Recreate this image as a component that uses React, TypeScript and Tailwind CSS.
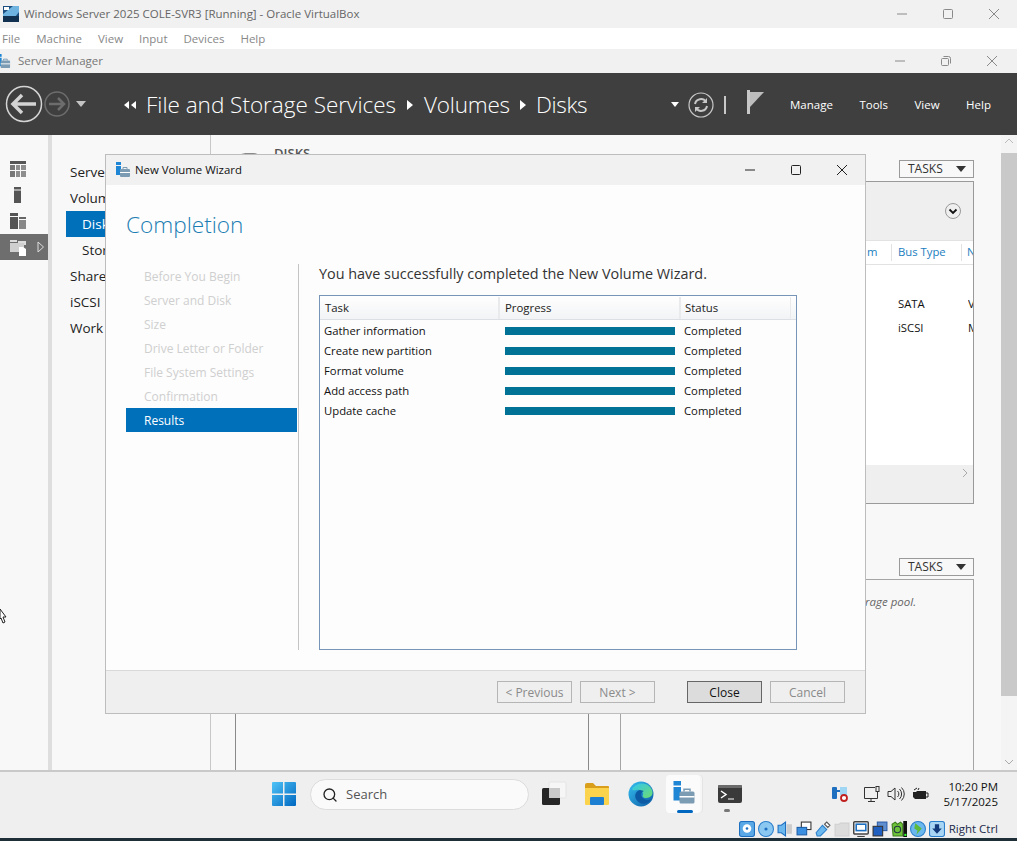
import { Search } from 'lucide-react'

const font = { fontFamily: '"Open Sans", "Noto Sans", sans-serif' }

const wizardSteps = ['Before You Begin', 'Server and Disk', 'Size', 'Drive Letter or Folder', 'File System Settings', 'Confirmation']
const tasks = ['Gather information', 'Create new partition', 'Format volume', 'Add access path', 'Update cache']

function WinControls({ restore, dark }: { restore?: boolean; dark?: boolean }) {
  const c = dark ? '#222' : '#8a8a8a'
  return (
    <div className="flex items-center">
      <svg width="46" height="16" viewBox="0 0 46 16"><path d="M18 8h10" stroke={c} /></svg>
      <svg width="46" height="16" viewBox="0 0 46 16">
        {restore ? (
          <g fill="none" stroke={c}><rect x="18.5" y="5.5" width="7" height="7" rx="1" /><path d="M20.5 3.5h5a2 2 0 0 1 2 2v5" /></g>
        ) : (
          <rect x="18.5" y="3.5" width="9" height="9" rx="1" fill="none" stroke={c} />
        )}
      </svg>
      <svg width="46" height="16" viewBox="0 0 46 16"><path d="M18 3l10 10M28 3L18 13" stroke={c} /></svg>
    </div>
  )
}

function ServerIcon({ size = 16 }: { size?: number }) {
  return (
    <svg width={size} height={size} viewBox="0 0 16 16">
      <rect x="1" y="0" width="5" height="3" fill="#1f86d6" />
      <rect x="1" y="4" width="5" height="9" fill="#1f86d6" />
      <rect x="5" y="7" width="10" height="8" rx="1" fill="#7c9cb4" />
      <path d="M8 7V5.5h4V7" fill="none" stroke="#7c9cb4" />
      <path d="M5 10.5h10" stroke="#fff" />
    </svg>
  )
}

function SideRow({ active, children }: { active?: boolean; children: React.ReactNode }) {
  return (
    <div className={active ? 'flex h-[26px] items-center bg-[#6e6e6e] pl-[10px]' : 'flex h-[26px] items-center pl-[10px]'}>
      {children}
      {active && (
        <svg className="ml-[10px]" width="8" height="12" viewBox="0 0 8 12"><path d="M1 1l5.500 5L1 11z" fill="none" stroke="#ddd" /></svg>
      )}
    </div>
  )
}

function NavItem({ label, active, sub }: { label: string; active?: boolean; sub?: boolean }) {
  return (
    <div className={`flex h-[26px] items-center text-[13.5px] ${active ? 'ml-[14px] bg-[#0070bb] pl-[16px] text-white' : sub ? 'pl-[30px] text-[#222]' : 'pl-[18px] text-[#222]'}`}>
      {label}
    </div>
  )
}

function TasksButton() {
  return (
    <div className="flex h-[18px] w-[75px] items-center justify-between border border-[#9a9a9a] pl-2 pr-[6px] text-[12px] leading-none text-[#333]">
      TASKS
      <svg width="12" height="6" viewBox="0 0 12 6"><path d="M1 0h10L6 6z" fill="#333" /></svg>
    </div>
  )
}

function WizardButton({ label, primary }: { label: string; primary?: boolean }) {
  return (
    <div className={`flex h-[22px] w-[75px] items-center justify-center border pt-px text-[12px] leading-none ${primary ? 'border-[#666] bg-[#dcdcdc] text-[#111]' : 'border-[#b5b5b5] text-[#8a8a8a]'}`}>
      {label}
    </div>
  )
}

function HeaderArrow() {
  return <svg width="6" height="10" viewBox="0 0 6 10"><path d="M0 0l6 5-6 5z" fill="#fff" /></svg>
}

function Wizard() {
  return (
    <div className="absolute left-[105px] top-[154px] flex h-[560px] w-[761px] flex-col border border-[#bdbdbd] bg-[#fdfdfd]">
      <div className="flex h-[30px] items-center justify-between bg-[#f1f1f1] pl-[9px]">
        <div className="flex items-center gap-[4px] text-[11.4px] text-[#111]">
          <ServerIcon />
          New Volume Wizard
        </div>
        <WinControls dark />
      </div>
      <div className="flex min-h-0 flex-1 flex-col pl-[20px] pr-[68px]">
        <div className="flex h-[79px] items-start pt-[24px] text-[22.6px] font-light leading-[32px] text-[#1b7db3]">Completion</div>
        <div className="flex h-[386px]">
          <div className="w-[172px]">
            {wizardSteps.map((s) => (
              <div key={s} className="flex h-[24px] items-center pl-[18px] pt-[2px] text-[12px] text-[#cfcfcf]">{s}</div>
            ))}
            <div className="flex h-[24px] w-[171px] items-center bg-[#0070bb] pl-[18px] pt-[2px] text-[12px] text-white">Results</div>
          </div>
          <div className="flex flex-1 flex-col border-l border-[#c4c4c4] pl-[20px]">
            <div className="flex h-[31px] items-center pb-[12px] pt-[1px] text-[14.4px] text-[#333]">You have successfully completed the New Volume Wizard.</div>
            <div className="flex-1 border border-[#7695b8] bg-[#fdfdfd]">
              <div className="flex h-[24px] border-b border-[#dcdfe3] bg-gradient-to-b from-white to-[#f2f3f5] pt-[1px] text-[11.4px] text-[#222]">
                <div className="flex w-[180px] items-center border-r-2 border-[#e8eaec] pl-[5px]">Task</div>
                <div className="flex w-[181px] items-center border-r-2 border-[#e8eaec] pl-[5px]">Progress</div>
                <div className="flex w-[110px] items-center border-r border-[#e8eaec] pl-[4px]">Status</div>
              </div>
              <div className="pt-[1px]">
                {tasks.map((t) => (
                  <div key={t} className="flex h-[20px] items-center text-[11.3px] text-[#111]">
                    <div className="w-[185px] pl-[4px]">{t}</div>
                    <div className="h-[8px] w-[170px] bg-[#007296]" />
                    <div className="pl-[9px]">Completed</div>
                  </div>
                ))}
              </div>
            </div>
          </div>
        </div>
      </div>
      <div className="flex h-[43px] items-center justify-end border-t border-[#d9d9d9] bg-[#efefef] pr-[20px]">
        <div className="flex gap-2">
          <WizardButton label="< Previous" />
          <WizardButton label="Next >" />
        </div>
        <div className="ml-8 flex gap-2">
          <WizardButton label="Close" primary />
          <WizardButton label="Cancel" />
        </div>
      </div>
    </div>
  )
}

function Taskbar() {
  return (
    <div className="flex h-[50px] items-center border-t-2 border-[#c9c9c9] bg-[#efefef] pb-[4px]">
      <div className="flex items-center pl-[272px]">
        <svg width="24" height="24" viewBox="0 0 24 24">
          <defs>
            <linearGradient id="winLogo" x1="0" y1="0" x2="1" y2="1"><stop offset="0" stopColor="#4fc3f7" /><stop offset="1" stopColor="#0067c0" /></linearGradient>
          </defs>
          <path d="M0 1a1 1 0 0 1 1-1h10v11.500H0zM12.500 0H23a1 1 0 0 1 1 1v10.500H12.500zM0 13h11v11H1a1 1 0 0 1-1-1zM12.500 13H24v10a1 1 0 0 1-1 1H12.500z" fill="url(#winLogo)" />
        </svg>
        <div className="ml-[14px] flex h-[31px] w-[219px] items-center rounded-full border border-[#dcdcdc] bg-[#fafafa] pl-[11px] pt-px text-[13px] text-[#555]">
          <Search size={16} strokeWidth={2} className="mr-[8px] text-[#222]" />
          Search
        </div>
        <svg className="ml-[12px]" width="26" height="26" viewBox="0 0 26 26">
          <rect x="8" y="1" width="17" height="16" rx="1.500" fill="#f6f6f6" stroke="#e4e4e4" />
          <rect x="1" y="7" width="18" height="17" rx="1.500" fill="#262626" />
          <rect x="8" y="7" width="11" height="10" fill="#c8c8c8" />
        </svg>
        <svg className="ml-[17px]" width="26" height="24" viewBox="0 0 26 24">
          <path d="M1 3a2 2 0 0 1 2-2h6l3 3h12a1 1 0 0 1 1 1v3H1z" fill="#d99e1c" />
          <path d="M1 6h24v16a1 1 0 0 1-1 1H2a1 1 0 0 1-1-1z" fill="#fcd34d" />
          <rect x="6" y="15" width="14" height="8" rx="1" fill="#1d7fd1" />
        </svg>
        <svg className="ml-[18px]" width="26" height="26" viewBox="0 0 26 26">
          <defs>
            <linearGradient id="edgeA" x1="0" y1="0" x2="1" y2="1"><stop offset="0" stopColor="#35c1f1" /><stop offset="1" stopColor="#0c59a4" /></linearGradient>
            <linearGradient id="edgeB" x1="0" y1="0" x2="1" y2="1"><stop offset="0" stopColor="#2fc6f0" /><stop offset="1" stopColor="#6fdc6f" /></linearGradient>
          </defs>
          <circle cx="13" cy="13" r="12.500" fill="url(#edgeA)" />
          <path d="M4 8C8 1 20 0 24 9c2 5-2 8-6 8-3 0-4-2-3-3 1-3-3-6-7-5-2 .4-3 1-4-1z" fill="url(#edgeB)" />
          <path d="M12 9c-4 1-6 5-4 9 2 4 7 6 11 4 2-1 3-2 4-4-3 2-7 1-9-2-1-2-1-5 2-6z" fill="#0c59a4" />
        </svg>
        <div className="relative ml-[12px] flex h-[38px] w-[34px] items-center justify-center rounded-[4px] bg-[#fbfbfb] pb-[2px] pl-[2px] shadow-[2px_0_0_#f6f6f6,3px_0_0_#e4e4e4]">
          <ServerIcon size={24} />
          <div className="absolute bottom-0 left-[11px] h-[3px] w-[16px] rounded-full bg-[#0067c0]" />
        </div>
        <div className="relative ml-[15px] flex h-[38px] w-[30px] items-start justify-center pt-[10px]">
          <svg width="24" height="19" viewBox="0 0 24 19">
            <rect width="24" height="18" rx="2" fill="#3a3a3a" />
            <rect width="24" height="3" rx="1" fill="#6b6b6b" />
            <path d="M3 6l5 3.500-5 3.500" fill="none" stroke="#fff" strokeWidth="1.500" />
            <path d="M10 14h6" stroke="#fff" />
          </svg>
          <div className="absolute bottom-[1px] left-[9px] h-[3px] w-[6px] rounded-full bg-[#777]" />
        </div>
      </div>
      <div className="ml-auto flex items-center">
        <svg width="18" height="16" viewBox="0 0 18 16">
          <rect x="1" y="1" width="5" height="12" rx="1" fill="#1f6fc0" />
          <rect x="9" y="1" width="7" height="8" fill="#9fd6f4" />
          <path d="M6 5h3" stroke="#1f6fc0" strokeWidth="2" />
          <circle cx="13" cy="12" r="3" fill="#fff" stroke="#c02020" strokeWidth="1.800" />
        </svg>
        <svg className="ml-[14px]" width="20" height="18" viewBox="0 0 20 18" fill="none" stroke="#333">
          <path d="M12 2.500H1.500v11h13V9M5 16.500h7M8 14v2" />
          <rect x="13" y="1.500" width="3" height="5" />
          <path d="M14.500 6.500V10" />
        </svg>
        <svg className="ml-[4px]" width="18" height="16" viewBox="0 0 18 16" fill="none" stroke="#333">
          <path d="M1 5.500h3l4-3.500v12l-4-3.500H1z" />
          <path d="M10.500 5a4 4 0 0 1 0 6M12.500 3a7 7 0 0 1 0 10M14.500 1.500a9 9 0 0 1 0 13" />
        </svg>
        <svg className="ml-[7px]" width="17" height="14" viewBox="0 0 17 14">
          <path d="M1 5h3l1-1h9v8H3l-2-2z" fill="#222" />
          <path d="M14 6h2v4h-2M2 3l3-2M6 3l1-2" stroke="#222" fill="none" />
        </svg>
        <div className="ml-[13px] mr-[19px] w-[56px] text-right text-[11.5px] leading-[15px] text-[#111]">
          <div>10:20 PM</div>
          <div>5/17/2025</div>
        </div>
      </div>
    </div>
  )
}

function StatusBar() {
  return (
    <div className="flex h-[18px] items-center justify-end bg-[#efefef] pr-[19px] text-[11.5px] text-[#1a2a4a]">
      <div className="flex items-center gap-[3px]">
        <svg width="16" height="16" viewBox="0 0 15 15"><rect x=".5" y=".5" width="14" height="14" rx="2" fill="#5aa9e6" stroke="#1f6fc0" /><circle cx="7.500" cy="7" r="4" fill="#fff" /><circle cx="7.500" cy="7" r="1.200" fill="#1f6fc0" /></svg>
        <svg width="16" height="16" viewBox="0 0 15 15"><circle cx="7.500" cy="7.500" r="7" fill="#8ac8f2" stroke="#2a7fcc" /><circle cx="7.500" cy="7.500" r="1.500" fill="#1f6fc0" /></svg>
        <svg width="16" height="16" viewBox="0 0 15 15"><path d="M1 4h3l4-3v13l-4-3H1z" fill="#6bb8ee" stroke="#1f6fc0" /><path d="M9 3h5v9H9z" fill="#ccc" /></svg>
        <svg width="16" height="16" viewBox="0 0 15 15"><rect x="5" y="1" width="9" height="7" fill="#fff" stroke="#333" /><rect x="1" y="6" width="9" height="7" fill="#3a8fe0" stroke="#1f5fa8" /></svg>
        <svg width="16" height="16" viewBox="0 0 15 15"><path d="M1 11l6-7 4 4-6 6H2z" fill="#6bb8ee" stroke="#2a7fcc" /><path d="M9 3l2-2 3 3-2 2z" fill="#fff" stroke="#555" /></svg>
        <svg width="16" height="16" viewBox="0 0 15 15"><path d="M1 3h4l1-1h8v12H1z" fill="#dcdcdc" stroke="#d0d0d0" /></svg>
        <svg width="16" height="16" viewBox="0 0 15 15"><rect x=".7" y=".7" width="13.600" height="11.600" rx="1" fill="#fff" stroke="#444" strokeWidth="1.400" /><rect x="3" y="3" width="9" height="6" fill="#fff" stroke="#1f6fc0" strokeWidth="1.500" /><path d="M4 14.500h7" stroke="#444" /></svg>
        <svg width="16" height="16" viewBox="0 0 15 15"><rect x="5" y="1" width="9" height="8" fill="#5f8fd0" stroke="#2d5ea8" /><rect x="1" y="5" width="9" height="9" fill="#1f5fc0" stroke="#333" /></svg>
        <svg width="16" height="16" viewBox="0 0 15 15"><path d="M1 3l3-2 2 2 3-2 2 2v11H2z" fill="#6cc33a" stroke="#3e7d1c" /><circle cx="6" cy="8" r="3" fill="none" stroke="#234" /><rect x="11.500" y="0" width="3.500" height="15" fill="#111" /><rect x="12.500" y="12" width="2" height="2" fill="#3f3" /></svg>
        <svg width="16" height="16" viewBox="0 0 15 15"><circle cx="7.500" cy="7.500" r="7" fill="#6bb8ee" stroke="#2a7fcc" /><path d="M5 2l6 5-5 6 1-4-3-2z" fill="#5dba3b" /></svg>
        <svg width="16" height="16" viewBox="0 0 15 15"><rect x=".5" y=".5" width="14" height="14" rx="2" fill="#a9d5f5" stroke="#2a7fcc" /><path d="M5.500 3h4v4H12l-4.500 5L3 7h2.500z" fill="#123a7a" /></svg>
        <span className="ml-[1px] leading-none">Right Ctrl</span>
      </div>
    </div>
  )
}

export default function App() {
  return (
    <div className="relative flex h-[841px] w-[1017px] flex-col overflow-hidden bg-white" style={font}>
      <div className="flex h-[28px] items-center justify-between bg-[#f1f1f1] pl-[3px]">
        <div className="flex items-center gap-[5px] text-[11.5px] text-[#666]">
          <svg width="16" height="16" viewBox="0 0 16 16">
            <rect width="16" height="16" fill="#1c4f80" />
            <path d="M0 8l10-8h6v6L8 16H0z" fill="#6fb3e0" />
            <rect y="10" width="16" height="6" fill="#12304f" />
            <path d="M1 1h5v3H1z" fill="#fff" />
          </svg>
          Windows Server 2025 COLE-SVR3 [Running] - Oracle VirtualBox
        </div>
        <WinControls />
      </div>
      <div className="flex h-[21px] items-center gap-[16px] bg-white pl-[2px] text-[11.5px] text-[#888]">
        <span>File</span><span>Machine</span><span>View</span><span>Input</span><span>Devices</span><span>Help</span>
      </div>
      <div className="flex h-[24px] items-center justify-between bg-[#f1f1f1]">
        <div className="flex items-center gap-[7px] text-[11.5px] text-[#777]">
          <div className="-ml-[4px]"><ServerIcon size={15} /></div>
          Server Manager
        </div>
        <div className="pr-[2px]"><WinControls restore /></div>
      </div>
      <div className="flex h-[62px] items-center bg-[#3f3f3f] text-white">
        <div className="flex items-center pl-[5px]">
          <svg width="38" height="38" viewBox="0 0 38 38" fill="none">
            <circle cx="19" cy="19" r="17.500" stroke="#d4d4d4" strokeWidth="1.500" />
            <path d="M31 19H9M17 10l-9 9 9 9" stroke="#d4d4d4" strokeWidth="3.500" />
          </svg>
          <svg className="ml-[1px]" width="26" height="26" viewBox="0 0 26 26" fill="none">
            <circle cx="13" cy="13" r="12" stroke="#6d6d6d" strokeWidth="1.500" />
            <path d="M5 13h15M14 7l6 6-6 6" stroke="#6d6d6d" strokeWidth="2.500" />
          </svg>
          <svg className="ml-[6px]" width="10" height="6" viewBox="0 0 10 6"><path d="M0 0h10L5 6z" fill="#c4c4c4" /></svg>
        </div>
        <div className="ml-[38px] flex items-center pt-[2px] text-[22.5px] font-light leading-none">
          <svg width="12" height="8" viewBox="0 0 12 8"><path d="M5 0v8L0 4zM12 0v8L7 4z" fill="#fff" /></svg>
          <span className="ml-[10px]">File and Storage Services</span>
          <span className="mx-[11px]"><HeaderArrow /></span>
          <span className="tracking-[-0.2px]">Volumes</span>
          <span className="mx-[10px]"><HeaderArrow /></span>
          <span className="tracking-[-0.3px]">Disks</span>
        </div>
        <div className="ml-auto flex items-center pr-[26px] pt-px">
          <svg width="8" height="5" viewBox="0 0 8 5"><path d="M0 0h8L4 5z" fill="#fff" /></svg>
          <svg className="ml-[9px]" width="26" height="26" viewBox="0 0 26 26" fill="none" stroke="#c8c8c8">
            <circle cx="13" cy="13" r="12" strokeWidth="1.200" />
            <path d="M7 12a6 6 0 0 1 11-2M19 14a6 6 0 0 1-11 2" strokeWidth="2" />
            <path d="M19 6v5h-5zM7 20v-5h5z" fill="#c8c8c8" stroke="none" />
          </svg>
          <div className="ml-[10px] h-[18px] w-[2px] bg-[#c8c8c8]" />
          <svg className="mb-[5px] ml-[21px]" width="18" height="24" viewBox="0 0 18 24"><path d="M0 0h3v24H0z" fill="#c8c8c8" /><path d="M3 2h14L3 17z" fill="#bdbdbd" /></svg>
          <div className="ml-[25px] flex gap-[26.5px] text-[11.5px] font-medium">
            <span>Manage</span><span>Tools</span><span>View</span><span>Help</span>
          </div>
        </div>
      </div>

      <div className="flex min-h-0 flex-1 bg-[#f8f8f8]">
        <div className="w-[48px] pt-[21px]">
          <SideRow>
            <svg width="17" height="17" viewBox="0 0 17 17">
              <path d="M0 0h16v3H0z" fill="#555" />
              <path d="M0 4h5v5H0zM0 10h5v6H0z" fill="#777" />
              <path d="M6 4h4v5H6zM11 4h5v5h-5zM6 10h4v6H6zM11 10h5v6h-5z" fill="#8e8e8e" />
            </svg>
          </SideRow>
          <SideRow>
            <svg width="17" height="17" viewBox="0 0 17 17"><path d="M4 0h7v2.500H4zM4 3.500h7V16H4z" fill="#555" /></svg>
          </SideRow>
          <SideRow>
            <svg width="17" height="17" viewBox="0 0 17 17">
              <path d="M0 0h8v3H0zM0 4h8v12H0z" fill="#555" />
              <path d="M9 4h7v2H9z" fill="#666" />
              <path d="M9 7h7v9H9z" fill="#888" />
            </svg>
          </SideRow>
          <SideRow active>
            <svg width="17" height="17" viewBox="0 0 17 17">
              <path d="M0 1h7v2H0zM8 2h8v4H8z" fill="#dcdcdc" />
              <path d="M0 4h14v9H0z" fill="#cfcfcf" />
              <path d="M9 8h4l3 2v7H9z" fill="#fff" />
            </svg>
          </SideRow>
        </div>
        <div className="w-[4px] bg-[#dedede]" />
        <div className="w-[158px] pt-[24px]">
          <NavItem label="Servers" />
          <NavItem label="Volumes" />
          <NavItem label="Disks" active />
          <NavItem label="Storage Pools" sub />
          <NavItem label="Shares" />
          <NavItem label="iSCSI" />
          <NavItem label="Work Folders" />
        </div>
        <div className="flex min-w-0 flex-1 flex-col overflow-hidden border-l border-[#c8c8c8] pl-[24px] pr-[27px]">
          <div className="flex h-[46px] items-end justify-between pb-[3px]">
            <div className="flex items-start self-start pt-[12px]">
              <svg className="mt-[6px]" width="29" height="6" viewBox="0 0 29 6"><path d="M2 6C3 2 7 0 12 0h5c5 0 9 2 10 6z" fill="#8a8a8a" /></svg>
              <span className="ml-[10px] text-[13px] font-semibold leading-none text-[#555]">DISKS</span>
            </div>
            <TasksButton />
          </div>
          <div className="flex h-[323px] flex-col border border-[#9a9a9a]">
            <div className="flex h-[58px] shrink-0 items-center justify-end bg-[#efefef] pr-[12px]">
              <svg width="16" height="16" viewBox="0 0 16 16" fill="none">
                <circle cx="8" cy="8" r="7.500" stroke="#999" />
                <path d="M4.500 6.500L8 10l3.500-3.500" stroke="#111" strokeWidth="1.800" />
              </svg>
            </div>
            <div className="flex h-[25px] shrink-0 items-center justify-end border-y border-[#e2e2e2] bg-white text-[11.3px] text-[#1a7ec0]">
              <span className="w-[26px] overflow-hidden border-r border-[#e2e2e2] pl-[1px] text-[#1a7ec0]">m</span>
              <span className="w-[70px] border-r border-[#e2e2e2] pl-[6px]">Bus Type</span>
              <span className="w-[11px] overflow-hidden pl-[5px]">N</span>
            </div>
            <div className="flex-1 bg-white pt-[27px] text-[11.3px] text-[#111]">
              <div className="flex h-[24px] items-center justify-end"><span className="w-[70px]">SATA</span><span className="w-[5px] overflow-hidden">V</span></div>
              <div className="flex h-[24px] items-center justify-end"><span className="w-[70px]">iSCSI</span><span className="w-[5px] overflow-hidden">M</span></div>
            </div>
            <div className="flex h-[38px] shrink-0 items-start justify-end bg-[#efefef] pr-[5px] pt-[3px]">
              <svg width="6" height="10" viewBox="0 0 6 10" fill="none"><path d="M1 1l4 4-4 4" stroke="#aaa" /></svg>
            </div>
          </div>
          <div className="flex h-[75px] shrink-0 items-end justify-end pb-[3px]">
            <TasksButton />
          </div>
          <div className="grid min-h-0 flex-1 grid-cols-[354px_354px] gap-[31px]">
            <div className="border-x border-[#8a8a8a]" />
            <div className="border-x border-t border-[#a5a5a5] pl-[244px] pt-[16px] text-[11.5px] italic leading-none text-[#666]">rage pool.</div>
          </div>
        </div>
        <div className="flex w-[16px] shrink-0 flex-col bg-[#f4f4f4]">
          <div className="flex h-[18px] items-start justify-center pt-[3px]">
            <svg width="10" height="6" viewBox="0 0 10 6" fill="none"><path d="M1 5l4-4 4 4" stroke="#bbb" /></svg>
          </div>
          <div className="h-[543px] bg-[#c9c9c9]" />
          <div className="flex flex-1 items-end justify-center pb-[5px]">
            <svg width="10" height="6" viewBox="0 0 10 6" fill="none"><path d="M1 1l4 4 4-4" stroke="#aaa" /></svg>
          </div>
        </div>
      </div>

      <Taskbar />
      <StatusBar />
      <div className="h-[3px] bg-[#1f2f38]" />
      <Wizard />
      <svg className="absolute left-0 top-[608px]" width="7" height="16" viewBox="0 0 7 16"><path d="M0 1l6 8H3l2 5-2 1-2-5-1 1z" fill="#fff" stroke="#222" /></svg>
    </div>
  )
}
